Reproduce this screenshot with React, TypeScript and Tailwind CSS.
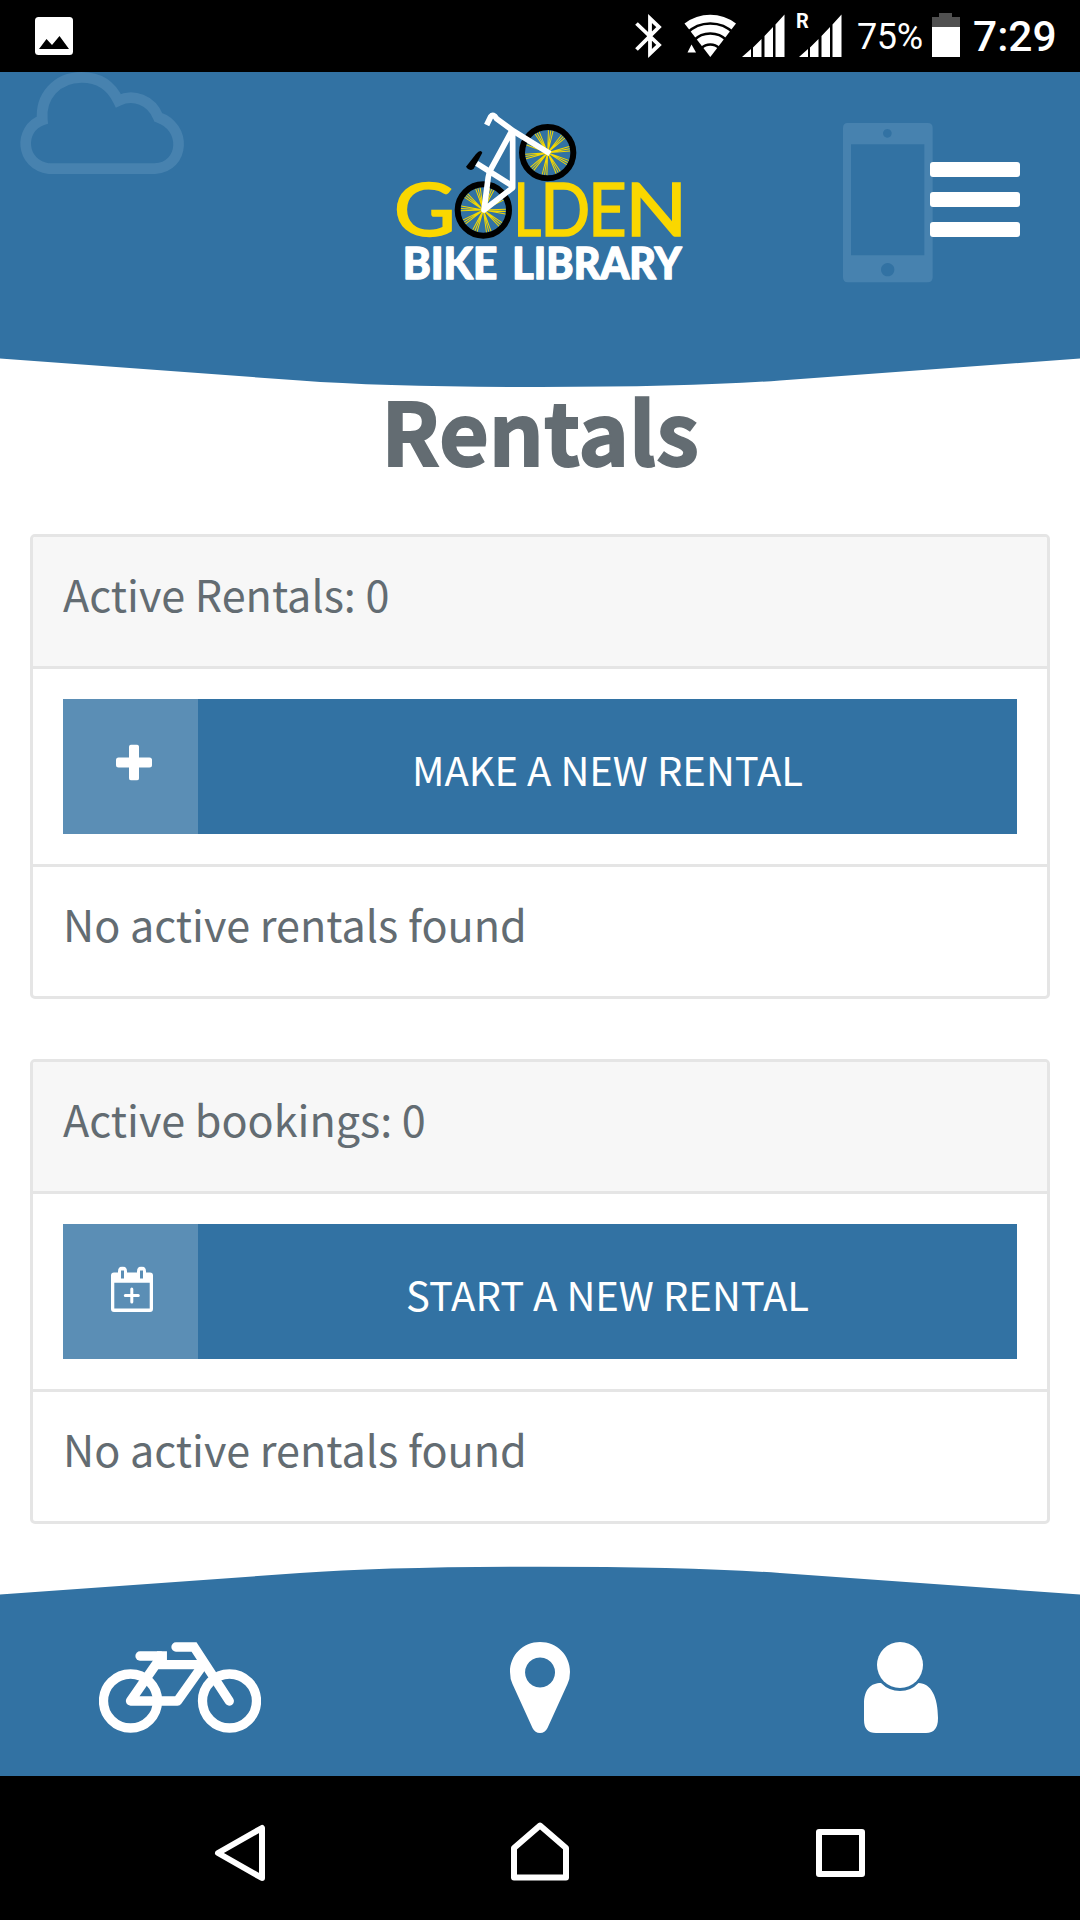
import type { ReactNode } from "react";

const SOURCE = "font-['Noto_Sans_CJK_SC','Noto_Sans',sans-serif]";

function Signal() {
  return (
    <svg className="block h-[43px] w-[43px]" viewBox="0 0 43 43" fill="#fff">
      <path d="M0 43 L9 35 V43Z M11 33.5 L19.5 25 V43H11Z M22.5 22 L31 13 V43H22.5Z M33.5 10.5 L42.5 0.5 V43H33.5Z" />
    </svg>
  );
}

function StatusBar() {
  return (
    <div className="flex h-[72px] shrink-0 items-start bg-black pl-[35px] pr-[24px] pt-[14px] font-[Roboto,sans-serif] text-white">
      <svg className="mt-[3px] h-[38px] w-[38px]" viewBox="0 0 38 38">
        <rect width="38" height="38" rx="3.5" fill="#fff" />
        <path d="M4 32 L11.5 22 L17 28 L24.5 19 L34 32Z" fill="#000" />
      </svg>
      <div className="flex-1" />
      <svg className="h-[44px] w-[28px]" viewBox="0 0 28 44" fill="none" stroke="#fff" strokeWidth="3.8">
        <path d="M1.5 9.5 L24 31 L15 39.500 V4.500 L24 13 L1.500 35.500" />
      </svg>
      <svg className="ml-[21px] h-[43px] w-[53px]" viewBox="0 0 53 43">
        <path d="M.5 9.500 A42.500 42.500 0 0 1 52 9.500 L26.300 43Z" fill="#fff" />
        <g fill="none" stroke="#000" strokeWidth="2.700">
          <circle cx="26.300" cy="43" r="33.500" />
          <circle cx="26.300" cy="43" r="23.500" />
          <circle cx="26.300" cy="43" r="12.500" />
        </g>
        <path d="M3.500 38.500 L7.500 30.500 L12 38.500Z" fill="#fff" />
      </svg>
      <div className="ml-[5px]"><Signal /></div>
      <div className="relative ml-[14px]">
        <span className="absolute -left-[3px] -top-[5px] text-[20px] leading-[24px] font-bold">R</span>
        <Signal />
      </div>
      <span className="ml-[15px] mt-[1px] w-[66px] whitespace-nowrap text-[36px] leading-[44px] tracking-[-0.4px]">75%</span>
      <svg className="-mt-[1px] ml-[9px] h-[44px] w-[28px]" viewBox="0 0 28 44">
        <path d="M0 4 H7 V0 H20 V4 H28 V15 H0Z" fill="#505050" />
        <path d="M0 14 H28 V44 H0Z" fill="#fff" />
      </svg>
      <span className="ml-[13px] w-[83px] whitespace-nowrap text-[42.5px] leading-[46px] font-medium">7:29</span>
    </div>
  );
}

function Spokes({ cx, cy, angle }: { cx: number; cy: number; angle: number }) {
  const rays = Array.from({ length: 10 }, (_, i) => i * 36 + angle);
  return (
    <g>
      <circle cx={cx} cy={cy} r="77" fill="none" stroke="#000" strokeWidth="18" />
      {rays.map((a) => (
        <path
          key={a}
          d={`M${cx} ${cy} l-7 -67 M${cx} ${cy} l0 -67 M${cx} ${cy} l7 -67`}
          transform={`rotate(${a} ${cx} ${cy})`}
          stroke="#f5d800"
          strokeWidth="3"
        />
      ))}
    </g>
  );
}

function Logo() {
  return (
    <svg className="h-[210px] w-[340px]" viewBox="0 0 1020 630">
      <g fill="#fad700" stroke="#fad700" strokeWidth="5" fontFamily="Lato, sans-serif" fontSize="222">
        <text x="71" y="437" textLength="186" lengthAdjust="spacingAndGlyphs">G</text>
        <text x="431" y="437" textLength="82" lengthAdjust="spacingAndGlyphs">L</text>
        <text x="511" y="437" textLength="150" lengthAdjust="spacingAndGlyphs">D</text>
        <text x="654" y="437" textLength="116" lengthAdjust="spacingAndGlyphs">E</text>
        <text x="766" y="437" textLength="186" lengthAdjust="spacingAndGlyphs">N</text>
      </g>
      <Spokes cx={533} cy={188} angle={8} />
      <Spokes cx={340} cy={360} angle={-14} />
      <path d="M288 230 L318 192 Q332 176 337 188 L311 236 Q298 246 288 230Z" fill="#000" />
      <g fill="none" stroke="#fff" strokeWidth="17" strokeLinejoin="round">
        <path d="M350 105 L362 80 Q370 70 380 86 L430 123 L540 191" />
        <path d="M424 125 L364 235 Q355 250 353 275 L342 360 L428 293 V125" />
        <path d="M320 220 L428 288" />
      </g>
      <g fill="#fff" stroke="#fff" strokeWidth="4" strokeLinejoin="round" fontFamily="Lato, sans-serif" fontWeight="900" fontSize="129">
        <text x="98" y="568" textLength="284" lengthAdjust="spacingAndGlyphs">BIKE</text>
        <text x="427" y="568" textLength="508" lengthAdjust="spacingAndGlyphs">LIBRARY</text>
      </g>
    </svg>
  );
}

function Header() {
  return (
    <header className="relative flex h-[315px] shrink-0 justify-center pt-[18px]">
      <svg className="absolute inset-0 h-full w-full" viewBox="0 0 1080 315">
        <path d="M0 0 H1080 V286.500 L780 308.500 Q693 315 540 315 Q387 315 300 308.500 L0 286.500Z" fill="#3272a3" />
      </svg>
      <svg className="absolute left-0 top-0 h-[128px] w-[200px]" viewBox="0 216 600 384">
        <path
          d="M147 506 C60 495 55 385 127 360 C120 290 170 232 245 232 C300 232 335 260 355 302 C400 280 455 300 475 352 C560 380 555 500 465 506Z"
          fill="none"
          stroke="#4782af"
          strokeWidth="32"
        />
      </svg>
      <svg className="absolute left-[843px] top-[51px] h-[160px] w-[90px]" viewBox="0 0 270 480">
        <path
          fillRule="evenodd"
          fill="#4782af"
          d="M14 0 H254 Q269 0 269 15 V463 Q269 478 254 478 H14 Q0 478 0 463 V15 Q0 0 14 0Z M24 64 V397 H244 V64Z M133 18 a13 13 0 1 0 .1 0Z M134 420 a20 20 0 1 0 .1 0Z"
        />
      </svg>
      <div className="relative"><Logo /></div>
      <button className="absolute right-[60px] top-[90px] flex w-[90px] flex-col gap-[15px]" aria-label="Menu">
        <span className="h-[15px] rounded-[3px] bg-white" />
        <span className="h-[15px] rounded-[3px] bg-white" />
        <span className="h-[15px] rounded-[3px] bg-white" />
      </button>
    </header>
  );
}

function PlusIcon() {
  return (
    <svg className="ml-[6px] h-[36px] w-[36px] -translate-y-[4.5px]" viewBox="0 0 36 36" fill="#fff">
      <rect x="13" width="10" height="36" rx="2.500" />
      <rect y="13" width="36" height="10" rx="2.500" />
    </svg>
  );
}

function CalendarPlusIcon() {
  return (
    <svg className="ml-[3px] h-[46px] w-[42px] -translate-y-[2.5px]" viewBox="0 0 42 46">
      <path
        fillRule="evenodd"
        fill="#fff"
        d="M3 6 H7 V5 Q7 0 11.500 0 Q16 0 16 5 V6 H26 V5 Q26 0 30.500 0 Q35 0 35 5 V6 H39 Q42 6 42 9 V42.500 Q42 45.500 39 45.500 H3 Q0 45.500 0 42.500 V9 Q0 6 3 6Z M3.300 16.300 V42 H38.700 V16.300Z M10 4 V12 H13 V4Z M29 4 V12 H32 V4Z"
      />
      <path d="M20.800 22.500 V35.500 M14.300 29 H27.300" stroke="#fff" strokeWidth="3" strokeLinecap="round" />
    </svg>
  );
}

function Card({ title, action, icon }: { title: string; action: string; icon: ReactNode }) {
  return (
    <section className="overflow-hidden rounded-[5px] border-[3px] border-[#e5e5e5] bg-white text-[43.15px] leading-[72px]">
      <div className="h-[132px] border-b-[3px] border-[#e5e5e5] bg-[#f7f7f7] px-[30px] pt-[20px]">{title}</div>
      <div className="border-b-[3px] border-[#e5e5e5] p-[30px]">
        <button className="flex h-[135px] w-full bg-[#3272a3] text-white">
          <span className="flex h-full w-[135px] items-center justify-center bg-[#5b8eb5]">{icon}</span>
          <span className="flex h-full flex-1 items-center justify-center pt-[4px] text-[40px]">{action}</span>
        </button>
      </div>
      <div className="h-[129px] px-[30px] pt-[20px]">No active rentals found</div>
    </section>
  );
}

function TabBar() {
  return (
    <nav className="relative grid h-[210px] shrink-0 grid-cols-3 pt-[76px]">
      <svg className="absolute inset-0 h-full w-full" viewBox="0 0 1080 210">
        <path d="M0 210 V28.500 L300 7 Q387 .7 540 .7 Q693 .7 780 7 L1080 28.500 V210Z" fill="#3272a3" />
      </svg>
      <div className="relative flex justify-center">
        <svg className="h-[91px] w-[162px]" viewBox="0 0 162 91" fill="none" stroke="#fff" strokeWidth="9.300">
          <ellipse cx="31.500" cy="59" rx="27" ry="27" />
          <ellipse cx="130.500" cy="59" rx="27" ry="27" />
          <g strokeLinecap="round">
            <path d="M41 14 H61" />
            <path d="M77 5 H95 L130.300 59" />
            <path d="M60 18 L31.500 59 H78.500 L104 23" strokeLinejoin="round" />
            <path d="M60 22.700 H102" />
          </g>
          <path d="M58 14 H63.300 V22" />
        </svg>
      </div>
      <div className="relative flex justify-center">
        <svg className="h-[91px] w-[60px]" viewBox="0 0 60 91" fill="#fff">
          <path
            fillRule="evenodd"
            d="M30 0 C47 0 60 13 60 30 Q60 37 57.500 42 L37.500 86 Q35 91 30 91 Q25 91 22.500 86 L2.500 42 Q0 37 0 30 C0 13 13 0 30 0Z M30 15.500 a15 15 0 1 0 .1 0Z"
          />
        </svg>
      </div>
      <div className="relative flex justify-center">
        <svg className="ml-[2px] h-[91px] w-[74px]" viewBox="0 0 74 91" fill="#fff">
          <circle cx="36" cy="23" r="23" />
          <path d="M17 41 Q25 49 36 49 Q47 49 54.500 41 C67 41 74 55 74 76 Q74 91 62 91 H12 Q0 91 0 78 V62 C0 47 7 41 17 41Z" />
        </svg>
      </div>
    </nav>
  );
}

function SystemNav() {
  return (
    <div className="grid h-[144px] shrink-0 grid-cols-3 items-center bg-black px-[90px]">
      <svg className="mx-auto h-[60px] w-[60px] translate-y-[5px]" viewBox="0 0 60 60" fill="none" stroke="#fff" strokeWidth="6" strokeLinejoin="round">
        <path d="M52 5 V55 L8 30Z" />
      </svg>
      <svg className="mx-auto h-[60px] w-[60px] translate-y-[3px]" viewBox="0 0 60 60" fill="none" stroke="#fff" strokeWidth="6" strokeLinejoin="round">
        <path d="M4 27 L30 4.500 L56 27 V56.500 H4Z" />
      </svg>
      <svg className="mx-auto h-[60px] w-[60px] translate-y-[5px]" viewBox="0 0 60 60" fill="none" stroke="#fff" strokeWidth="6" strokeLinejoin="round">
        <rect x="9" y="9" width="43" height="42" />
      </svg>
    </div>
  );
}

export default function App() {
  return (
    <div className={`flex h-[1920px] w-[1080px] flex-col overflow-hidden bg-white text-[#636c72] ${SOURCE}`}>
      <StatusBar />
      <Header />
      <main className="flex-1">
        <h1 className="mb-[65px] pt-[2px] text-center text-[86px] leading-[80px] font-bold [-webkit-text-stroke:1.8px_#636c72]">
          Rentals
        </h1>
        <div className="flex flex-col gap-[60px] px-[30px]">
          <Card title="Active Rentals: 0" action="MAKE A NEW RENTAL" icon={<PlusIcon />} />
          <Card title="Active bookings: 0" action="START A NEW RENTAL" icon={<CalendarPlusIcon />} />
        </div>
      </main>
      <TabBar />
      <SystemNav />
    </div>
  );
}
